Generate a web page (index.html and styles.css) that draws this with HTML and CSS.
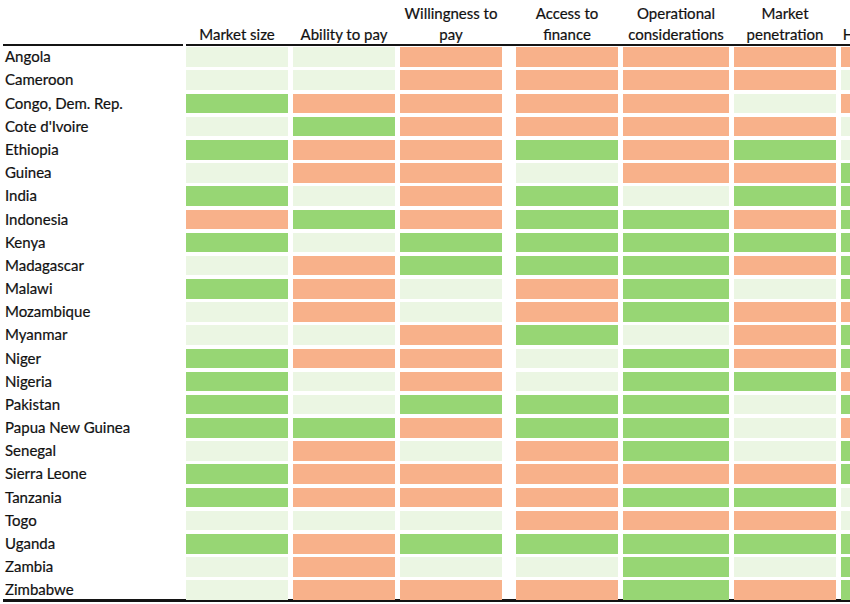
FILE: index.html
```html
<!DOCTYPE html>
<html lang="en">
<head>
<meta charset="utf-8">
<title>Market assessment</title>
<link rel="stylesheet" href="styles.css">
</head>
<body>
<div class="sheet">
  <div class="row head">
    <div class="hcell"></div>
    <div class="hcell">Market size</div>
    <div class="hcell">Ability to pay</div>
    <div class="hcell">Willingness to<br>pay</div>
    <div class="hcell">Access to<br>finance</div>
    <div class="hcell">Operational<br>considerations</div>
    <div class="hcell">Market<br>penetration</div>
    <div class="hcell">Health impacts</div>
  </div>
  <div class="rule-top"><div class="rule-left"></div><div class="rule-right"></div></div>
  <div class="body">
    <div class="row"><div class="name">Angola</div><div class="c l"></div><div class="c l"></div><div class="c o"></div><div class="c o"></div><div class="c o"></div><div class="c o"></div><div class="c o"></div></div>
    <div class="row"><div class="name">Cameroon</div><div class="c l"></div><div class="c l"></div><div class="c o"></div><div class="c o"></div><div class="c o"></div><div class="c o"></div><div class="c l"></div></div>
    <div class="row"><div class="name">Congo, Dem. Rep.</div><div class="c g"></div><div class="c o"></div><div class="c o"></div><div class="c o"></div><div class="c o"></div><div class="c l"></div><div class="c o"></div></div>
    <div class="row"><div class="name">Cote d'Ivoire</div><div class="c l"></div><div class="c g"></div><div class="c o"></div><div class="c o"></div><div class="c o"></div><div class="c o"></div><div class="c l"></div></div>
    <div class="row"><div class="name">Ethiopia</div><div class="c g"></div><div class="c o"></div><div class="c o"></div><div class="c g"></div><div class="c o"></div><div class="c g"></div><div class="c l"></div></div>
    <div class="row"><div class="name">Guinea</div><div class="c l"></div><div class="c o"></div><div class="c o"></div><div class="c l"></div><div class="c o"></div><div class="c o"></div><div class="c g"></div></div>
    <div class="row"><div class="name">India</div><div class="c g"></div><div class="c l"></div><div class="c o"></div><div class="c g"></div><div class="c l"></div><div class="c g"></div><div class="c g"></div></div>
    <div class="row"><div class="name">Indonesia</div><div class="c o"></div><div class="c g"></div><div class="c o"></div><div class="c g"></div><div class="c g"></div><div class="c o"></div><div class="c g"></div></div>
    <div class="row"><div class="name">Kenya</div><div class="c g"></div><div class="c l"></div><div class="c g"></div><div class="c g"></div><div class="c g"></div><div class="c g"></div><div class="c g"></div></div>
    <div class="row"><div class="name">Madagascar</div><div class="c l"></div><div class="c o"></div><div class="c g"></div><div class="c g"></div><div class="c g"></div><div class="c o"></div><div class="c g"></div></div>
    <div class="row"><div class="name">Malawi</div><div class="c g"></div><div class="c o"></div><div class="c l"></div><div class="c o"></div><div class="c g"></div><div class="c l"></div><div class="c g"></div></div>
    <div class="row"><div class="name">Mozambique</div><div class="c l"></div><div class="c o"></div><div class="c l"></div><div class="c o"></div><div class="c g"></div><div class="c o"></div><div class="c o"></div></div>
    <div class="row"><div class="name">Myanmar</div><div class="c l"></div><div class="c l"></div><div class="c o"></div><div class="c g"></div><div class="c l"></div><div class="c o"></div><div class="c g"></div></div>
    <div class="row"><div class="name">Niger</div><div class="c g"></div><div class="c o"></div><div class="c o"></div><div class="c l"></div><div class="c g"></div><div class="c o"></div><div class="c g"></div></div>
    <div class="row"><div class="name">Nigeria</div><div class="c g"></div><div class="c l"></div><div class="c o"></div><div class="c l"></div><div class="c g"></div><div class="c g"></div><div class="c o"></div></div>
    <div class="row"><div class="name">Pakistan</div><div class="c g"></div><div class="c l"></div><div class="c g"></div><div class="c g"></div><div class="c g"></div><div class="c l"></div><div class="c g"></div></div>
    <div class="row"><div class="name">Papua New Guinea</div><div class="c g"></div><div class="c g"></div><div class="c o"></div><div class="c g"></div><div class="c g"></div><div class="c l"></div><div class="c o"></div></div>
    <div class="row"><div class="name">Senegal</div><div class="c l"></div><div class="c o"></div><div class="c l"></div><div class="c o"></div><div class="c g"></div><div class="c l"></div><div class="c g"></div></div>
    <div class="row"><div class="name">Sierra Leone</div><div class="c g"></div><div class="c o"></div><div class="c o"></div><div class="c o"></div><div class="c o"></div><div class="c o"></div><div class="c g"></div></div>
    <div class="row"><div class="name">Tanzania</div><div class="c g"></div><div class="c o"></div><div class="c o"></div><div class="c o"></div><div class="c g"></div><div class="c g"></div><div class="c l"></div></div>
    <div class="row"><div class="name">Togo</div><div class="c l"></div><div class="c l"></div><div class="c l"></div><div class="c o"></div><div class="c o"></div><div class="c o"></div><div class="c l"></div></div>
    <div class="row"><div class="name">Uganda</div><div class="c g"></div><div class="c o"></div><div class="c g"></div><div class="c g"></div><div class="c g"></div><div class="c g"></div><div class="c g"></div></div>
    <div class="row"><div class="name">Zambia</div><div class="c l"></div><div class="c o"></div><div class="c l"></div><div class="c l"></div><div class="c g"></div><div class="c l"></div><div class="c g"></div></div>
    <div class="row"><div class="name">Zimbabwe</div><div class="c l"></div><div class="c o"></div><div class="c o"></div><div class="c o"></div><div class="c g"></div><div class="c o"></div><div class="c g"></div></div>
  </div>
  <div class="rule-bottom"></div>
</div>
</body>
</html>
```

FILE: styles.css
```css
html, body {
  margin: 0;
  padding: 0;
  background: #ffffff;
}
body {
  width: 850px;
  height: 604px;
  overflow: hidden;
  font-family: Lato, "Open Sans", "Liberation Sans", sans-serif;
  font-size: 15px;
  color: #111111;
  -webkit-text-stroke: 0.2px #111111;
}
.sheet {
  padding-left: 3px;
  width: 1000px;
}
.row {
  display: grid;
  grid-template-columns: 178px 102px 102px 102px 111px 106px 102px 102px;
  column-gap: 5px;
}
.row > :nth-child(5) {
  margin-left: 9px;
}
.head {
  height: 44px;
  align-items: end;
}
.hcell {
  text-align: center;
  line-height: 20.5px;
  white-space: nowrap;
}
.rule-top {
  display: flex;
  height: 2px;
}
.rule-left {
  width: 180px;
  background: #141414;
}
.rule-right {
  margin-left: 3px;
  width: 664px;
  background: #141414;
}
.body {
  padding-top: 1.3px;
  display: flex;
  flex-direction: column;
  gap: 4.59px;
}
.body .row {
  height: 18.6px;
}
.name {
  padding-left: 2px;
  line-height: 19.6px;
  white-space: nowrap;
}
.c.l { background: #ebf6e3; }
.c.g { background: #97d674; }
.c.o { background: #f8b18a; }
.rule-bottom {
  margin-top: 0.4px;
  width: 847px;
  height: 3px;
  background: #141414;
}
```
